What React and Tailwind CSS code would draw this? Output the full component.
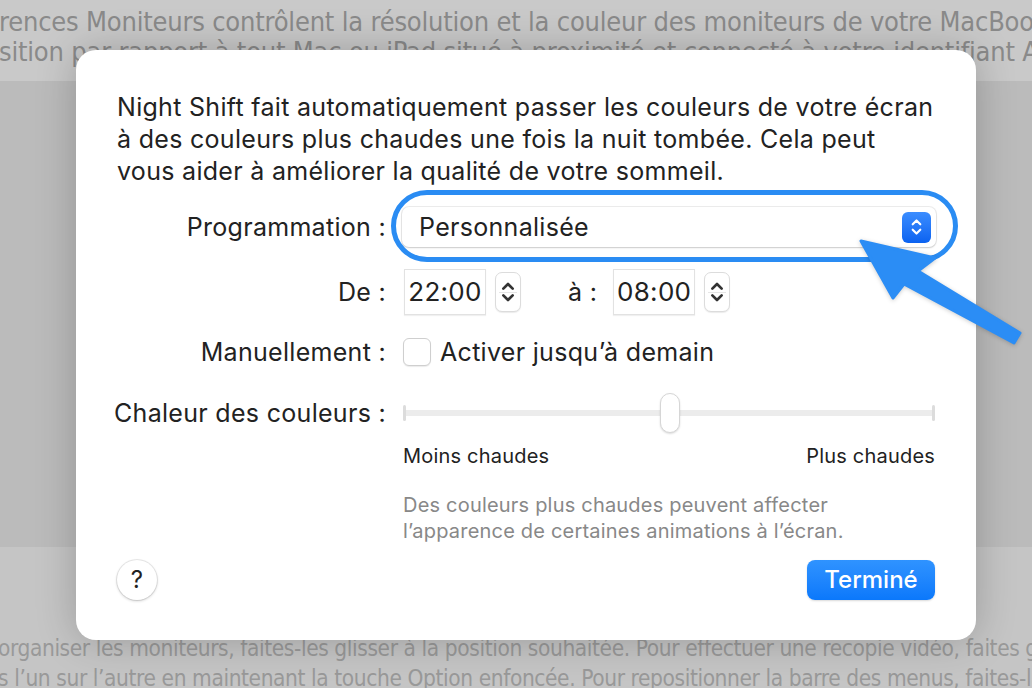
import React from 'react';

const sf = { fontFamily: 'Inter, "Liberation Sans", sans-serif' };
const narrow = { fontFamily: '"DejaVu Sans Condensed", "Liberation Sans Narrow", Roboto, sans-serif' };

function Chevrons({ className = '' }) {
  return (
    <svg viewBox="0 0 12 20" className={className} fill="none" stroke="currentColor" strokeWidth="2" strokeLinecap="round" strokeLinejoin="round">
      <path d="M2.5 7.5 6 4l3.5 3.5" />
      <path d="M2.5 12.5 6 16l3.5-3.5" />
    </svg>
  );
}

function TimeField({ value }) {
  return (
    <div className="flex items-center gap-[9px]">
      <div className="flex h-[46px] w-[82px] items-center justify-center border border-[#e2e2e2] bg-white text-[26px] leading-none text-[#222] shadow-[0_1px_1px_rgba(0,0,0,0.06)]">
        {value}
      </div>
      <div className="relative flex h-[40px] w-[26px] flex-col items-center justify-center rounded-[7px] border border-[#dcdcdc] bg-white text-[#333] shadow-[0_1px_1px_rgba(0,0,0,0.08)]">
        <div className="absolute left-[3px] right-[3px] top-1/2 h-px bg-[#e6e6e6]" />
        <Chevrons className="h-[34px] w-[16px]" />
      </div>
    </div>
  );
}

function Label({ children }) {
  return <div className="flex justify-end whitespace-nowrap">{children}</div>;
}

export default function App() {
  return (
    <div className="relative h-[688px] w-[1032px] overflow-hidden bg-[#bcbcbc]" style={sf}>
      {/* page behind the sheet */}
      <div className="flex h-full flex-col">
        <div className="h-[81px] bg-[#c9c9c9] pt-[7px] text-[27px] leading-[30px] text-[#8a8a8a] whitespace-nowrap" style={narrow}>
          <div className="-ml-[1px] tracking-[-0.2px]">rences Moniteurs contrôlent la résolution et la couleur des moniteurs de votre MacBook Pro</div>
          <div className="-ml-[1px] tracking-[-0.2px]">sition par rapport à tout Mac ou iPad situé à proximité et connecté à votre identifiant Apple</div>
        </div>
        <div className="flex-1 bg-[#bbbbbb]" />
        <div className="h-[141px] bg-[#c5c5c5] pt-[86px] text-[22.5px] leading-[30px] text-[#999] whitespace-nowrap" style={narrow}>
          <div className="-ml-[2px] tracking-[-0.4px]">organiser les moniteurs, faites-les glisser à la position souhaitée. Pour effectuer une recopie vidéo, faites glisser</div>
          <div className="-ml-[2px] tracking-[-0.4px]">s l’un sur l’autre en maintenant la touche Option enfoncée. Pour repositionner la barre des menus, faites-la glisser</div>
        </div>
      </div>

      {/* Night Shift sheet */}
      <div className="absolute left-[76px] top-[50px] flex h-[590px] w-[900px] flex-col rounded-[20px] bg-white pl-[41px] pr-[41px] pt-[41px] text-[#222] shadow-[0_0_40px_rgba(0,0,0,0.22)]">
        <p className="text-[25px] leading-[32px] whitespace-nowrap tracking-[0.3px]">
          Night Shift fait automatiquement passer les couleurs de votre écran
          <br />à des couleurs plus chaudes une fois la nuit tombée. Cela peut
          <br />vous aider à améliorer la qualité de votre sommeil.
        </p>

        <div className="mt-[20px] grid h-[40px] grid-cols-[269px_1fr] items-center gap-x-[16px] text-[25px] leading-none tracking-[0.3px]">
          <Label>Programmation :</Label>
          <div className="relative h-[40px] w-[534px]">
            <div className="flex h-full items-center justify-between rounded-[7px] bg-white pl-[17px] pr-[5px] shadow-[0_0_0_1px_rgba(0,0,0,0.07),0_1px_2px_rgba(0,0,0,0.15)]">
              <span>Personnalisée</span>
              <div className="flex h-[31px] w-[29px] items-center justify-center rounded-[6px] bg-gradient-to-b from-[#3b8dff] to-[#0a62f0] text-white">
                <Chevrons className="h-[22px] w-[13px]" />
              </div>
            </div>
            <div className="absolute -bottom-[15px] -left-[11px] -right-[22px] -top-[17px] rounded-full border-[5px] border-[#2a8cf3]" />
          </div>
        </div>

        <div className="mt-[22px] grid h-[46px] grid-cols-[269px_1fr] items-center gap-x-[18px] text-[25px] leading-none tracking-[0.3px]">
          <Label>De :</Label>
          <div className="flex items-center">
            <TimeField value="22:00" />
            <span className="ml-[47px] mr-[16px]">à :</span>
            <TimeField value="08:00" />
          </div>
        </div>

        <div className="mt-[23px] grid h-[28px] grid-cols-[269px_1fr] items-center gap-x-[17px] text-[25px] leading-none tracking-[0.3px]">
          <Label>Manuellement :</Label>
          <div className="flex items-center gap-[9px]">
            <div className="h-[28px] w-[28px] rounded-[6px] border border-[#cfcfcf] bg-white shadow-[0_1px_1px_rgba(0,0,0,0.08)]" />
            <span>Activer jusqu’à demain</span>
          </div>
        </div>

        <div className="mt-[27px] grid h-[40px] grid-cols-[269px_1fr] items-center gap-x-[17px] text-[25px] leading-none tracking-[0.3px]">
          <Label>Chaleur des couleurs :</Label>
          <div className="relative flex h-[40px] w-[532px] items-center">
            <div className="flex h-[16px] w-full items-center justify-between">
              <div className="h-[16px] w-[3px] rounded-full bg-[#dcdcdc]" />
              <div className="h-[6px] flex-1 bg-[#ececec]" />
              <div className="h-[16px] w-[3px] rounded-full bg-[#dcdcdc]" />
            </div>
            <div className="absolute left-[257px] top-0 h-[40px] w-[20px] rounded-full border border-[#d6d6d6] bg-white shadow-[0_1px_2px_rgba(0,0,0,0.15)]" />
          </div>
        </div>

        <div className="mt-[12px] ml-[286px] flex h-[22px] w-[532px] items-center justify-between text-[20px] leading-none tracking-[0.2px]">
          <span>Moins chaudes</span>
          <span>Plus chaudes</span>
        </div>

        <p className="mt-[25px] ml-[286px] text-[20px] leading-[26px] tracking-[0.2px] text-[#888] whitespace-nowrap">
          Des couleurs plus chaudes peuvent affecter
          <br />l’apparence de certaines animations à l’écran.
        </p>

        <div className="mt-[16px] flex items-center justify-between">
          <div className="flex h-[40px] w-[40px] items-center justify-center rounded-full bg-white text-[24px] shadow-[0_0_0_1px_rgba(0,0,0,0.08),0_1px_3px_rgba(0,0,0,0.2)]">
            ?
          </div>
          <div className="flex h-[40px] w-[128px] items-center justify-center rounded-[8px] bg-gradient-to-b from-[#2f93ff] to-[#0a78fb] text-[24px] font-medium text-white shadow-[0_1px_2px_rgba(0,0,0,0.15)]">
            Terminé
          </div>
        </div>
      </div>

      {/* annotation arrow */}
      <svg className="pointer-events-none absolute left-0 top-0 h-[688px] w-[1032px]" viewBox="0 0 1032 688">
        <polygon
          points="861,241 935,258 918,271 1020,333 1014,343 904,284 893,298"
          fill="#2b8df5"
          stroke="#2b8df5"
          strokeWidth="3"
          strokeLinejoin="round"
          style={{ filter: 'drop-shadow(0 1px 2px rgba(0,0,0,0.2))' }}
        />
      </svg>
    </div>
  );
}
